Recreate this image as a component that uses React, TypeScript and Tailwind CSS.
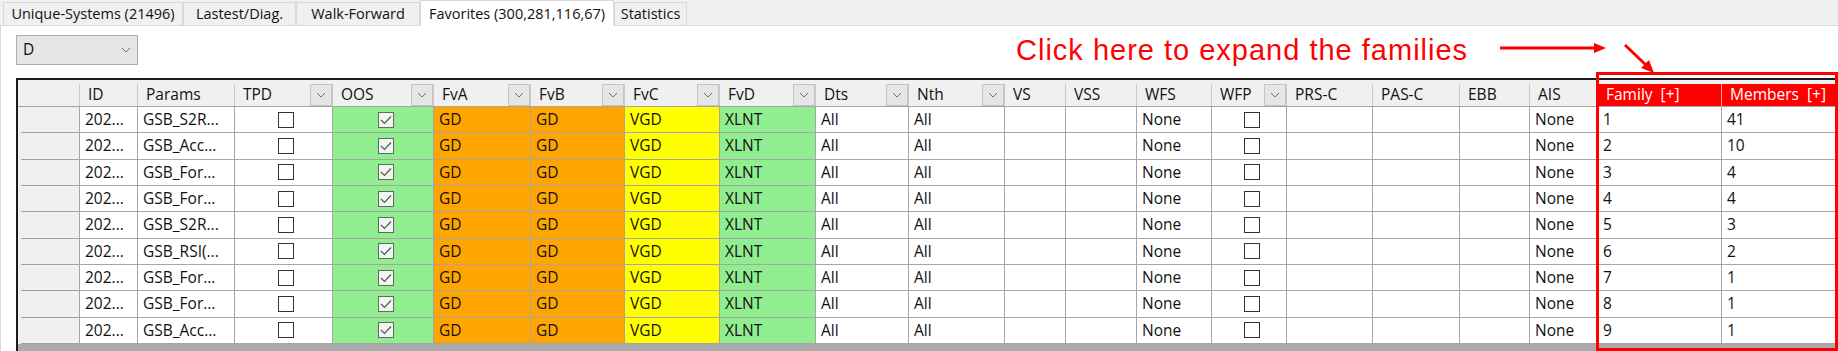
import React from "react";

type Col = {
  key: string;
  label: string;
  w: string;
  filter?: boolean;
  bg?: string;
  check?: boolean;
  text?: string;
  red?: boolean;
};

const COLS: Col[] = [
  { key: "id", label: "ID", w: "w-[58px]" },
  { key: "params", label: "Params", w: "w-[97px]" },
  { key: "tpd", label: "TPD", w: "w-[98px]", filter: true, check: false },
  { key: "oos", label: "OOS", w: "w-[101px]", filter: true, check: true, bg: "bg-[#90ee90]" },
  { key: "fva", label: "FvA", w: "w-[97px]", filter: true, bg: "bg-[#ffa500]", text: "GD" },
  { key: "fvb", label: "FvB", w: "w-[94px]", filter: true, bg: "bg-[#ffa500]", text: "GD" },
  { key: "fvc", label: "FvC", w: "w-[95px]", filter: true, bg: "bg-[#ffff00]", text: "VGD" },
  { key: "fvd", label: "FvD", w: "w-[96px]", filter: true, bg: "bg-[#90ee90]", text: "XLNT" },
  { key: "dts", label: "Dts", w: "w-[93px]", filter: true, text: "All" },
  { key: "nth", label: "Nth", w: "w-[96px]", filter: true, text: "All" },
  { key: "vs", label: "VS", w: "w-[61px]", text: "" },
  { key: "vss", label: "VSS", w: "w-[71px]", text: "" },
  { key: "wfs", label: "WFS", w: "w-[75px]", text: "None" },
  { key: "wfp", label: "WFP", w: "w-[75px]", filter: true, check: false },
  { key: "prsc", label: "PRS-C", w: "w-[86px]", text: "" },
  { key: "pasc", label: "PAS-C", w: "w-[87px]", text: "" },
  { key: "ebb", label: "EBB", w: "w-[70px]", text: "" },
  { key: "ais", label: "AIS", w: "w-[68px]", text: "None" },
  { key: "family", label: "Family", w: "w-[124px]", red: true },
  { key: "members", label: "Members", w: "w-[118px]", red: true },
];

const ROWS = [
  { params: "GSB_S2R...", family: "1", members: "41" },
  { params: "GSB_Acc...", family: "2", members: "10" },
  { params: "GSB_For...", family: "3", members: "4" },
  { params: "GSB_For...", family: "4", members: "4" },
  { params: "GSB_S2R...", family: "5", members: "3" },
  { params: "GSB_RSI(...", family: "6", members: "2" },
  { params: "GSB_For...", family: "7", members: "1" },
  { params: "GSB_For...", family: "8", members: "1" },
  { params: "GSB_Acc...", family: "9", members: "1" },
];

const TABS = [
  { label: "Unique-Systems (21496)", w: "w-[180px]" },
  { label: "Lastest/Diag.", w: "w-[113px]" },
  { label: "Walk-Forward", w: "w-[124px]" },
  { label: "Favorites (300,281,116,67)", w: "w-[194px]", active: true },
  { label: "Statistics", w: "w-[73px]" },
];

function Chevron({ className }: { className?: string }) {
  return (
    <svg className={className} width="10" height="6" viewBox="0 0 10 6" fill="none">
      <path d="M1 1l4 4 4-4" stroke="#707070" strokeWidth="1" />
    </svg>
  );
}

function CheckBox({ checked }: { checked: boolean }) {
  if (!checked) {
    return <div className="h-[16px] w-[16px] border-[1.5px] border-[#333] bg-white" />;
  }
  return (
    <div className="flex h-[16px] w-[16px] items-center justify-center border-[1.5px] border-[#666] bg-[#eef8ee]">
      <svg width="12" height="10" viewBox="0 0 12 10" fill="none">
        <path d="M1 5l3.5 3.5L11 1.5" stroke="#555" strokeWidth="1.2" />
      </svg>
    </div>
  );
}

function HeaderCell({ col }: { col: Col }) {
  return (
    <div className={`${col.w} h-[26px] shrink-0 pt-[4px]`}>
      <div
        className={`flex h-full items-center justify-between border-r ${
          col.red ? "border-[#f4b0b0] bg-[#ff0000] text-white" : "border-[#c9c9c9]"
        }`}
      >
        <span className="pl-[8px] whitespace-pre">
          {col.red ? `${col.label}  [+]` : col.label}
        </span>
        {col.filter && (
          <div className="flex h-[22px] w-[22px] self-end items-center justify-center border border-[#c4c4c4] bg-[#e6e6e6]">
            <Chevron />
          </div>
        )}
      </div>
    </div>
  );
}

function DataCell({ col, row }: { col: Col; row: (typeof ROWS)[number] }) {
  let content: React.ReactNode = null;
  if (col.check !== undefined) {
    content = (
      <div className="flex w-full justify-center">
        <CheckBox checked={col.check} />
      </div>
    );
  } else if (col.key === "id") {
    content = "202...";
  } else if (col.key === "params") {
    content = row.params;
  } else if (col.key === "family") {
    content = row.family;
  } else if (col.key === "members") {
    content = row.members;
  } else {
    content = col.text;
  }
  return (
    <div
      className={`${col.w} ${col.bg ?? "bg-white"} flex h-full shrink-0 items-center border-r border-b border-[#a6a6a6] pl-[5px] whitespace-nowrap`}
    >
      {content}
    </div>
  );
}

export default function App() {
  return (
    <div className="relative h-[351px] w-[1838px] overflow-hidden bg-white font-['Open_Sans',sans-serif] text-[15.5px] text-[#111]">
      {/* Tabs */}
      <div className="flex h-[26px] items-end border-b border-[#d9d9d9] bg-[#f0f0f0] pl-[3px] text-[14.5px]">
        {TABS.map((t) => (
          <div
            key={t.label}
            className={`${t.w} flex items-center justify-center border border-b-0 border-[#d9d9d9] ${
              t.active ? "-mb-px h-[26px] bg-white" : "h-[23px] bg-[#f0f0f0]"
            }`}
          >
            {t.label}
          </div>
        ))}
      </div>

      {/* Content */}
      <div className="h-[325px] border-l border-[#d9d9d9] pl-[15px] pt-[9px]">
        <div className="flex h-[30px] w-[122px] items-center justify-between border border-[#adadad] bg-[#e5e5e5] pl-[6px] pr-[6px]">
          <span>D</span>
          <Chevron />
        </div>

        {/* Grid */}
        <div className="mt-[13px] flex flex-col border-l-2 border-t-2 border-[#1c1c1c]">
          <div className="flex border-b border-[#a6a6a6] bg-[#f0f0f0]">
            <div className="h-[26px] w-[62px] shrink-0 pt-[4px]">
              <div className="h-full border-r border-[#c9c9c9]" />
            </div>
            {COLS.map((c) => (
              <HeaderCell key={c.key} col={c} />
            ))}
          </div>
          {ROWS.map((r, i) => (
            <div key={i} className="flex h-[26.33px]">
              <div className="h-full w-[62px] shrink-0 border-r border-[#a6a6a6] bg-[#f0f0f0] pl-[3px]">
                <div className="h-full border-b border-[#a0a0a0]" />
              </div>
              {COLS.map((c) => (
                <DataCell key={c.key} col={c} row={r} />
              ))}
            </div>
          ))}
          <div className="h-[12px] bg-[#ababab]" />
        </div>
      </div>

      {/* Annotation */}
      <div className="pointer-events-none absolute left-[1016px] top-[36px] font-['Liberation_Sans',Arial,sans-serif] text-[29px] leading-none tracking-[1px] text-[#ff0000]">
        Click here to expand the families
      </div>
      <svg className="pointer-events-none absolute left-0 top-0" width="1838" height="351">
        <line x1="1500" y1="48" x2="1595" y2="48" stroke="#ff0000" strokeWidth="3" />
        <polygon points="1606,48 1594,43 1594,53" fill="#ff0000" />
        <line x1="1625" y1="45" x2="1647" y2="66" stroke="#ff0000" strokeWidth="3" />
        <polygon points="1654,73 1641,68 1649,60" fill="#ff0000" />
      </svg>
      <div className="pointer-events-none absolute left-[1596px] top-[72px] h-[279px] w-[242px] border-[3px] border-[#ff0000]" />
    </div>
  );
}
